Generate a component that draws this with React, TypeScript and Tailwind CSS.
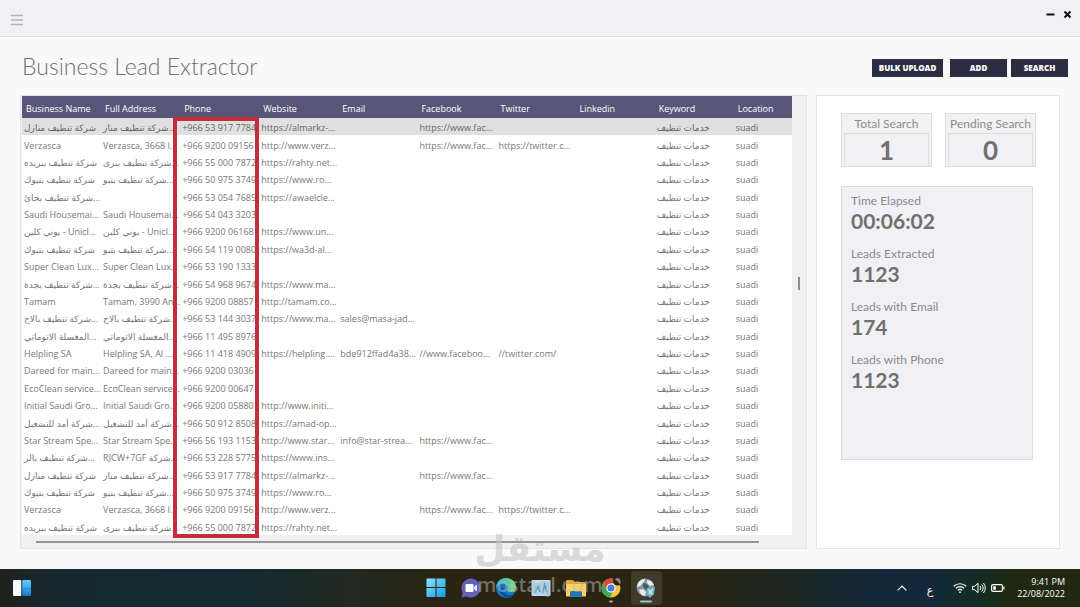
import React from "react";

type Lead = {
  name: string;
  address?: string;
  phone: string;
  website?: string;
  email?: string;
  facebook?: string;
  twitter?: string;
};

const columns = [
  "Business Name",
  "Full Address",
  "Phone",
  "Website",
  "Email",
  "Facebook",
  "Twitter",
  "Linkedin",
  "Keyword",
  "Location",
];

const leads: Lead[] = [
  { name: "شركة تنظيف منازل", address: "شركة تنظيف مناز...", phone: "+966 53 917 7784", website: "https://almarkz-...", facebook: "https://www.fac..." },
  { name: "Verzasca", address: "Verzasca, 3668 I...", phone: "+966 9200 09156", website: "http://www.verz...", facebook: "https://www.fac...", twitter: "https://twitter.c..." },
  { name: "شركة تنظيف ببريده", address: "شركة تنظيف ببرى...", phone: "+966 55 000 7872", website: "https://rahty.net..." },
  { name: "شركة تنظيف بتبوك", address: "شركة تنظيف بتبو...", phone: "+966 50 975 3749", website: "https://www.ro..." },
  { name: "شركة تنظيف بحائ...", phone: "+966 53 054 7685", website: "https://awaelcle..." },
  { name: "Saudi Housemai...", address: "Saudi Housemai...", phone: "+966 54 043 3203" },
  { name: "يوني كلين - Unicl...", address: "يوني كلين - Unicl...", phone: "+966 9200 06168", website: "https://www.un..." },
  { name: "شركة تنظيف بتبوك", address: "شركة تنظيف بتبو...", phone: "+966 54 119 0080", website: "https://wa3d-al..." },
  { name: "Super Clean Lux...", address: "Super Clean Lux...", phone: "+966 53 190 1333" },
  { name: "شركة تنظيف بجدة...", address: "شركة تنظيف بجدة...", phone: "+966 54 968 9674", website: "https://www.ma..." },
  { name: "Tamam", address: "Tamam, 3990 An...", phone: "+966 9200 08857", website: "http://tamam.co..." },
  { name: "شركة تنظيف بالاح...", address: "شركة تنظيف بالاح...", phone: "+966 53 144 3037", website: "https://www.ma...", email: "sales@masa-jad..." },
  { name: "المغسلة الاتوماتي...", address: "المغسلة الاتوماتي...", phone: "+966 11 495 8976" },
  { name: "Helpling SA", address: "Helpling SA, Al ...", phone: "+966 11 418 4909", website: "https://helpling....", email: "bde912ffad4a38...", facebook: "//www.faceboo...", twitter: "//twitter.com/" },
  { name: "Dareed for main...", address: "Dareed for main...", phone: "+966 9200 03036" },
  { name: "EcoClean service...", address: "EcoClean service...", phone: "+966 9200 00647" },
  { name: "Initial Saudi Gro...", address: "Initial Saudi Gro...", phone: "+966 9200 05880", website: "http://www.initi..." },
  { name: "شركة أمد للتشغيل...", address: "شركة أمد للتشغيل...", phone: "+966 50 912 8508", website: "https://amad-op..." },
  { name: "Star Stream Spe...", address: "Star Stream Spe...", phone: "+966 56 193 1153", website: "http://www.star...", email: "info@star-strea...", facebook: "https://www.fac..." },
  { name: "شركة تنظيف بالر...", address: "RJCW+7GF شركة...", phone: "+966 53 228 5775", website: "https://www.ins..." },
  { name: "شركة تنظيف منازل", address: "شركة تنظيف مناز...", phone: "+966 53 917 7784", website: "https://almarkz-...", facebook: "https://www.fac..." },
  { name: "شركة تنظيف بتبوك", address: "شركة تنظيف بتبو...", phone: "+966 50 975 3749", website: "https://www.ro..." },
  { name: "Verzasca", address: "Verzasca, 3668 I...", phone: "+966 9200 09156", website: "http://www.verz...", facebook: "https://www.fac...", twitter: "https://twitter.c..." },
  { name: "شركة تنظيف ببريده", address: "شركة تنظيف ببرى...", phone: "+966 55 000 7872", website: "https://rahty.net..." },
];

const stats = [
  { label: "Time Elapsed", value: "00:06:02" },
  { label: "Leads Extracted", value: "1123" },
  { label: "Leads with Email", value: "174" },
  { label: "Leads with Phone", value: "1123" },
];

function TitleBar() {
  return (
    <header className="flex h-[37px] items-center justify-between border-b border-[#dedee0] bg-[#f0f0f5] pr-2 pl-[11px]">
      <button aria-label="Menu" className="mt-1">
        <svg width="12" height="12" viewBox="0 0 12 12" stroke="#b4b4b8" strokeWidth="1.3">
          <path d="M0 1.5h12M0 6h12M0 10.5h12" />
        </svg>
      </button>
      <div className="mb-2 flex items-center gap-2">
        <button aria-label="Minimize">
          <svg width="9" height="9" viewBox="0 0 9 9" stroke="#111" strokeWidth="2">
            <path d="M.5 4.5h8" />
          </svg>
        </button>
        <button aria-label="Close">
          <svg width="9" height="9" viewBox="0 0 9 9" stroke="#111" strokeWidth="2">
            <path d="M1.5 1.5l6 6M7.5 1.5l-6 6" />
          </svg>
        </button>
      </div>
    </header>
  );
}

function ActionButton({ children, wide = false }: { children: React.ReactNode; wide?: boolean }) {
  return (
    <button
      className={`h-[18px] bg-[#2d2d42] font-['Open_Sans',sans-serif] text-[8px] leading-[18px] font-extrabold text-white ${
        wide ? "mr-[3px] w-[71px]" : "w-[57px]"
      }`}
    >
      {children}
    </button>
  );
}

function LeadsTable() {
  return (
    <section className="flex min-w-0 flex-1 border border-[#e4e4e6] bg-[#f0f0f1] pl-px">
      <div className="flex min-w-0 flex-1 flex-col">
        <div className="relative grid flex-1 bg-white">
          <table className="w-full table-fixed border-collapse text-left font-['Open_Sans','DejaVu_Sans',sans-serif] text-[9px] leading-[15px] whitespace-nowrap">
            <colgroup>
              {columns.map((c) => (
                <col key={c} className={c === "Location" ? "" : "w-[10.27%]"} />
              ))}
            </colgroup>
            <thead>
              <tr className="h-[22px] bg-[#575679] text-white">
                {columns.map((c) => (
                  <th key={c} scope="col" className="p-0 pt-0.5 pl-1 font-medium">
                    {c}
                  </th>
                ))}
              </tr>
            </thead>
            <tbody className="text-[#777]">
              {leads.map((l, i) => (
                <tr key={i} className={i === 0 ? "h-[17px] bg-[#e1e0e0] text-[#666]" : "h-[17px]"}>
                  {[l.name, l.address, l.phone, l.website, l.email, l.facebook, l.twitter, "", "خدمات تنظيف", "suadi"].map(
                    (v, j) => (
                      <td key={j} className="overflow-hidden p-0 pt-0.5 pl-0.5">
                        {v}
                      </td>
                    ),
                  )}
                </tr>
              ))}
            </tbody>
          </table>
          <div className="pointer-events-none absolute top-[21px] -bottom-[3px] left-[19.6%] w-[11.2%] border-4 border-[#c22e3c]" />
        </div>
        <div className="flex h-[13px] items-center pr-[33px] pl-[14px]">
          <div className="h-0.5 flex-1 bg-[#949494]" />
        </div>
      </div>
      <div className="flex w-[14px] items-center justify-center pb-[77px]">
        <div className="h-[13px] w-0.5 bg-[#8c8c8c]" />
      </div>
    </section>
  );
}

function SearchCard({ label, value }: { label: string; value: string }) {
  return (
    <div className="flex h-[54px] flex-1 flex-col border border-[#dcdcde] bg-[#f2f2f3] px-0.5 pb-0.5">
      <div className="h-[19px] text-center text-[12px] leading-5 whitespace-nowrap text-[#8c8c8c]">{label}</div>
      <div className="flex-1 border border-[#dcdce0] bg-[#f0f0f5] text-center text-[26px] leading-8 font-bold text-[#707072]">
        {value}
      </div>
    </div>
  );
}

function Summary() {
  return (
    <aside className="w-[244px] border border-[#e6e6e8] bg-white pt-[17px] pl-6">
      <div className="mr-[23px] flex gap-[13px]">
        <SearchCard label="Total Search" value="1" />
        <SearchCard label="Pending Search" value="0" />
      </div>
      <dl className="mt-[19px] mr-[26px] flex h-[274px] flex-col gap-[13px] border border-[#dcdcde] bg-[#f1f1f5] pt-[6px] pl-[9px]">
        {stats.map((s) => (
          <div key={s.label}>
            <dt className="text-[12px] leading-4 text-[#8a8a8a]">{s.label}</dt>
            <dd className="text-[21px] leading-6 font-bold text-[#707070]">{s.value}</dd>
          </div>
        ))}
      </dl>
    </aside>
  );
}

function TaskIcon({ label, children, active = false }: { label: string; children: React.ReactNode; active?: boolean }) {
  return (
    <button
      aria-label={label}
      className={`flex h-[34px] w-[31px] items-center justify-center rounded ${active ? "bg-white/10" : ""}`}
    >
      <svg width="22" height="30" viewBox="0 -4 22 30">
        {children}
      </svg>
    </button>
  );
}

function Taskbar() {
  return (
    <footer className="relative flex h-[38px] items-center justify-center bg-[linear-gradient(90deg,#20211d_0%,#142a30_6%,#142b32_22%,#22291f_33%,#2a2412_42%,#2a2412_63%,#1d2822_73%,#12283a_81%,#14283a_86%,#142d22_91%,#20290f_94%,#222715_100%)] text-white">
      <button aria-label="Widgets" className="absolute top-2.5 left-[13px]">
        <svg width="18" height="18" viewBox="0 0 18 18">
          <defs>
            <linearGradient id="wid" x1="0" y1="0" x2="0" y2="1">
              <stop offset="0" stopColor="#65cdf8" />
              <stop offset=".6" stopColor="#2aa3ec" />
              <stop offset="1" stopColor="#1474c8" />
            </linearGradient>
          </defs>
          <rect y="1" width="8.3" height="16" rx="1" fill="#f2fbff" />
          <rect x="9.3" y="1" width="8.7" height="16" rx="1" fill="url(#wid)" />
          <path d="M9.3 9.5h8.7" stroke="#1c84d2" strokeWidth=".8" />
        </svg>
      </button>
      <nav className="flex gap-1 pl-0.5">
        <TaskIcon label="Start">
          <defs>
            <linearGradient id="win" x1="0" y1="0" x2="1" y2="1">
              <stop offset="0" stopColor="#8be4fa" />
              <stop offset="1" stopColor="#129be8" />
            </linearGradient>
          </defs>
          <path fill="url(#win)" d="M2 1.5h8.5V10H1.5V2zM11.5 1.5H20l.5.5v8h-9zM1.500 11h9v9H2l-.5-.5zM11.500 11h9v8.500l-.5.5h-8.500z" />
        </TaskIcon>
        <TaskIcon label="Chat">
          <path fill="#6460b8" d="M11 1.500a9.500 9.500 0 1 1-4.500 17.900L1.500 20.500l1.100-5A9.500 9.500 0 0 1 11 1.500z" />
          <rect x="5.500" y="7" width="8" height="8" rx="1.300" fill="#fff" />
          <path fill="#e5e2ff" d="M14 9.700l3-2.200v7l-3-2.200z" />
        </TaskIcon>
        <TaskIcon label="Edge">
          <defs>
            <linearGradient id="edg" x1="0" y1="0" x2="1" y2="0">
              <stop offset="0" stopColor="#2fb4dd" />
              <stop offset="1" stopColor="#7ade72" />
            </linearGradient>
          </defs>
          <circle cx="11" cy="11" r="10" fill="#1576c4" />
          <path fill="url(#edg)" d="M1 11C1 5 5.500 1 11 1s10 4 10 9c0 3.500-2.700 5-5.500 5-2 0-3.500-.7-3.500-1.700 0-.6 1-.8 1-2.600 0-2.200-2.100-3.900-5-3.900C4.800 6.800 2 8.500 1 11z" />
          <path fill="#0c4f99" d="M8.300 10C7 14.500 11 19 17.800 18.300 12.500 23 4.500 19 5 13.500c.2-1.800 1.500-3 3.300-3.500z" />
        </TaskIcon>
        <TaskIcon label="Monitor">
          <rect x="1.500" y="3" width="19" height="16" rx="1" fill="#c4dae8" />
          <rect x="2.500" y="6" width="17" height="11.500" fill="#a9d0e6" />
          <path d="M5 15.500l3-6 2 5.500M13 15.500l1.500-8 2.500 7.500" fill="none" stroke="#4b9ac7" strokeWidth="1.400" />
        </TaskIcon>
        <TaskIcon label="File Explorer">
          <path fill="#e6a323" d="M1 4.500C1 3.500 1.500 3 2.500 3H8l2 2h9.500c1 0 1.500.5 1.500 1.500V18H1z" />
          <path fill="#ffd35a" d="M1 7h20v11.500c0 .6-.4 1-1 1H2c-.6 0-1-.4-1-1z" />
          <path fill="#1f78b8" d="M5 19.500v-3.700c0-1 .7-1.800 1.800-1.800h8.400c1.100 0 1.800.8 1.800 1.800v3.700z" />
        </TaskIcon>
        <TaskIcon label="Chrome">
          <circle cx="11" cy="11" r="9.500" fill="#f5c63c" />
          <path fill="#d94b3d" d="M2.800 6.200A9.500 9.500 0 0 1 19.200 6.200H11L7 13z" />
          <path fill="#3fa756" d="M2.800 6.200l4.600 7.400 5 2.200-2.400 4.600A9.500 9.500 0 0 1 2.800 6.200z" />
          <circle cx="11" cy="11" r="4.600" fill="#fff" />
          <circle cx="11" cy="11" r="3.500" fill="#3f7fe0" />
          <circle cx="17.500" cy="4" r="4.500" fill="#26231e" />
          <path fill="#87837a" d="M15 2.500a3 3 0 0 1 5.500 1c.8 2-.3 3.500-1.500 4 .4-1.600-.2-2.600-1.500-3z" />
          <rect x="9" y="23.500" width="4" height="2" rx="1" fill="#aaa897" />
        </TaskIcon>
        <TaskIcon label="Business Lead Extractor" active>
          <circle cx="10.500" cy="10.500" r="9" fill="#8d969c" />
          <path fill="#e7ecef" d="M3 6c2-3 5-4.500 7-4.300L9 5 5 9 2 10zM12 3l4 1 3 4-4 1-3-3zM4 13l4-1 3 3-1 4c-3 0-5-3-6-6z" />
          <path fill="#4d5963" d="M8 6l4 1 2 3-3 3-3-3z" />
          <path fill="#64b5c4" d="M12 11l8-1-1 7-4 4-3-3z" />
          <path d="M13.500 12.500l4 5M18 12l-4 5" stroke="#d3edf0" strokeWidth="1.300" />
          <rect x="5" y="23.500" width="12" height="2" rx="1" fill="#8ec5d2" />
        </TaskIcon>
      </nav>
      <div className="absolute top-0 right-[15px] flex h-full items-center font-['Open_Sans','DejaVu_Sans',sans-serif] text-[9px] leading-3 font-medium">
        <svg width="10" height="6" viewBox="0 0 10 6" fill="none" stroke="#fff" strokeWidth="1.200">
          <path d="M.7 5.300L5 1l4.300 4.300" />
        </svg>
        <span className="mt-1 ml-5 text-[11px]">ع</span>
        <svg className="ml-5" width="14" height="12" viewBox="0 0 14 12" fill="none" stroke="#fff" strokeWidth="1.200">
          <path d="M.8 4.300a8.800 8.800 0 0 1 12.400 0M2.800 6.400a6 6 0 0 1 8.400 0M4.800 8.400a3.200 3.200 0 0 1 4.400 0" />
          <circle cx="7" cy="10.200" r=".9" fill="#fff" stroke="none" />
        </svg>
        <svg className="ml-[5px]" width="14" height="12" viewBox="0 0 14 12" fill="none" stroke="#fff" strokeWidth="1">
          <path d="M.6 4.300h2L6 1.300v9.400l-3.400-3h-2zM8 4a3 3 0 0 1 0 4M9.700 2.400a5.200 5.200 0 0 1 0 7.200M11.400 1a7.500 7.500 0 0 1 0 10" />
        </svg>
        <svg className="ml-[5px]" width="14" height="10" viewBox="0 0 14 10">
          <rect x=".6" y="1.600" width="10.800" height="6.800" rx="1.500" fill="none" stroke="#fff" strokeWidth="1.200" />
          <path fill="#fff" d="M2.200 3.200h2.600v3.600H2.200zM12.300 3.500h1.200v3h-1.200z" />
        </svg>
        <div className="ml-3 text-right">
          <div>9:41 PM</div>
          <div>22/08/2022</div>
        </div>
      </div>
      <div
        aria-hidden="true"
        className="pointer-events-none absolute -top-[42px] left-1/2 flex -translate-x-1/2 flex-col items-center"
      >
        <span
          className="font-['DejaVu_Sans',sans-serif] text-[36px] leading-[44px] font-bold text-[#c4c4c4]/60"
          lang="ar"
        >
          مستقل
        </span>
        <span className="font-['Open_Sans',sans-serif] text-[20px] leading-[28px] font-semibold text-[#b9b9b9]/50">
          mostaql.com
        </span>
      </div>
    </footer>
  );
}

export default function App() {
  return (
    <div className="flex min-h-screen flex-col bg-[#f9f9fa] font-['Lato',sans-serif]">
      <TitleBar />
      <main className="flex flex-1 flex-col px-5 pb-5">
        <div className="-mr-2 flex h-[58px] items-center justify-between">
          <h1 className="ml-0.5 text-[23px] leading-7 font-light text-[#707070]">Business Lead Extractor</h1>
          <div className="mt-1 flex gap-1">
            <ActionButton wide>BULK UPLOAD</ActionButton>
            <ActionButton>ADD</ActionButton>
            <ActionButton>SEARCH</ActionButton>
          </div>
        </div>
        <div className="flex flex-1 gap-[9px]">
          <LeadsTable />
          <Summary />
        </div>
      </main>
      <Taskbar />
    </div>
  );
}
